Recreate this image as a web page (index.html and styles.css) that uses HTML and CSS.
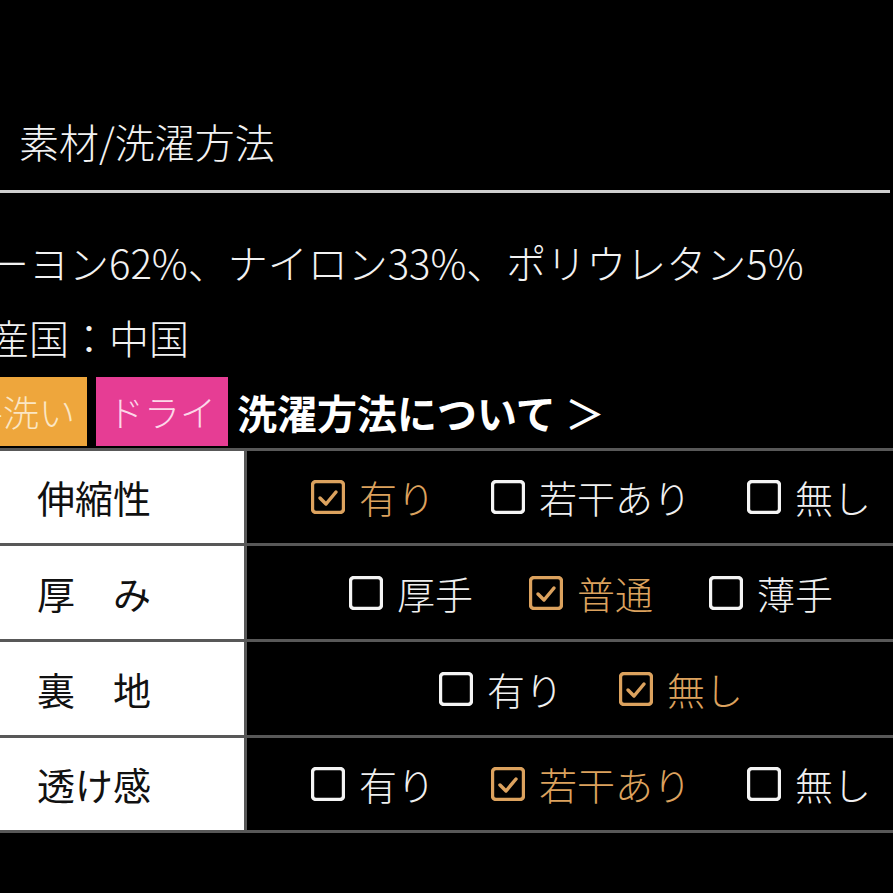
FILE: index.html
```html
<!DOCTYPE html>
<html lang="ja">
<head>
<meta charset="utf-8">
<title>素材/洗濯方法</title>
<link rel="stylesheet" href="styles.css">
</head>
<body>
<header class="head">
  <h2 class="title">素材/洗濯方法</h2>
</header>
<section class="content">
  <p class="line">レーヨン62%、ナイロン33%、ポリウレタン5%</p>
  <p class="line line-origin">原産国：中国</p>
  <div class="wash">
    <span class="badge badge-orange">手洗い</span>
    <span class="badge badge-pink">ドライ</span>
    <a class="wash-link">洗濯方法について <span class="chev">＞</span></a>
  </div>
  <div class="spec">
    <div class="row">
      <div class="label">伸縮性</div>
      <div class="opts">
        <span class="opt on"><svg class="box" viewBox="0 0 34 34"><rect x="1.5" y="1.5" width="31" height="31" rx="3.5"/><polyline points="9,18 15,24 25,12"/></svg>有り</span>
        <span class="opt"><svg class="box" viewBox="0 0 34 34"><rect x="1.5" y="1.5" width="31" height="31" rx="3.5"/></svg>若干あり</span>
        <span class="opt"><svg class="box" viewBox="0 0 34 34"><rect x="1.5" y="1.5" width="31" height="31" rx="3.5"/></svg>無し</span>
      </div>
    </div>
    <div class="row row-tall">
      <div class="label">厚　み</div>
      <div class="opts">
        <span class="opt"><svg class="box" viewBox="0 0 34 34"><rect x="1.5" y="1.5" width="31" height="31" rx="3.5"/></svg>厚手</span>
        <span class="opt on"><svg class="box" viewBox="0 0 34 34"><rect x="1.5" y="1.5" width="31" height="31" rx="3.5"/><polyline points="9,18 15,24 25,12"/></svg>普通</span>
        <span class="opt"><svg class="box" viewBox="0 0 34 34"><rect x="1.5" y="1.5" width="31" height="31" rx="3.5"/></svg>薄手</span>
      </div>
    </div>
    <div class="row row-tall">
      <div class="label">裏　地</div>
      <div class="opts">
        <span class="opt"><svg class="box" viewBox="0 0 34 34"><rect x="1.5" y="1.5" width="31" height="31" rx="3.5"/></svg>有り</span>
        <span class="opt on"><svg class="box" viewBox="0 0 34 34"><rect x="1.5" y="1.5" width="31" height="31" rx="3.5"/><polyline points="9,18 15,24 25,12"/></svg>無し</span>
      </div>
    </div>
    <div class="row">
      <div class="label">透け感</div>
      <div class="opts">
        <span class="opt"><svg class="box" viewBox="0 0 34 34"><rect x="1.5" y="1.5" width="31" height="31" rx="3.5"/></svg>有り</span>
        <span class="opt on"><svg class="box" viewBox="0 0 34 34"><rect x="1.5" y="1.5" width="31" height="31" rx="3.5"/><polyline points="9,18 15,24 25,12"/></svg>若干あり</span>
        <span class="opt"><svg class="box" viewBox="0 0 34 34"><rect x="1.5" y="1.5" width="31" height="31" rx="3.5"/></svg>無し</span>
      </div>
    </div>
  </div>
</section>
</body>
</html>
```
FILE: styles.css
```css
html, body {
  margin: 0;
  padding: 0;
  background: #000;
  overflow: hidden;
}
body {
  width: 893px;
  height: 893px;
  font-family: "Noto Sans CJK JP", "Noto Sans", sans-serif;
  color: #f2f2f2;
}
.head {
  width: 890px;
  padding: 121px 0 29px 0;
  border-bottom: 3px solid #cfcfcf;
}
.title {
  margin: 0 0 0 19px;
  font-size: 40px;
  line-height: 40px;
  font-weight: 300;
  color: #f2f2f2;
}
.content {
  margin-left: -51px;
  width: 990px;
}
.line {
  margin: 49px 0 0 0;
  font-size: 40px;
  line-height: 40px;
  font-weight: 300;
  white-space: nowrap;
}
.line-origin {
  margin-top: 35px;
}
.wash {
  margin-top: 20px;
  display: flex;
  align-items: center;
  height: 69px;
}
.badge {
  height: 69px;
  line-height: 69px;
  font-size: 36px;
  font-weight: 300;
  padding: 0 12px;
  color: #fff;
  white-space: nowrap;
}
.badge-orange {
  background: #eea63c;
  color: #fbe6c4;
  margin-left: 6px;
}
.badge-pink {
  background: #e63d94;
  color: #fcd7e8;
  margin-left: 9px;
}
.wash-link {
  margin-left: 9px;
  font-size: 40px;
  line-height: 40px;
  font-weight: 700;
  color: #fff;
  white-space: nowrap;
}
.chev {
  font-weight: 500;
}
.spec {
  margin-top: 2px;
  border-top: 3px solid #585858;
}
.row {
  display: grid;
  grid-template-columns: 298px 688px;
  height: 92px;
  border-bottom: 3px solid #585858;
}
.row-tall {
  height: 93px;
}
.label {
  background: #fff;
  border-right: 3px solid #585858;
  color: #111;
  font-size: 38px;
  line-height: 38px;
  font-weight: 400;
  display: flex;
  align-items: center;
  padding-left: 88px;
  white-space: nowrap;
}
.opts {
  display: flex;
  justify-content: center;
  align-items: center;
  gap: 56px;
}
.opt {
  display: flex;
  align-items: center;
  gap: 14px;
  font-size: 38px;
  line-height: 38px;
  font-weight: 300;
  color: #f0f0f0;
  white-space: nowrap;
}
.box {
  width: 34px;
  height: 34px;
  flex: none;
}
.box rect {
  fill: none;
  stroke: #f4f4f4;
  stroke-width: 3.4;
}
.box polyline {
  fill: none;
  stroke: #dca25e;
  stroke-width: 3.5;
  stroke-linecap: round;
  stroke-linejoin: round;
}
.opt.on {
  color: #dca25e;
}
.opt.on .box rect {
  stroke: #dca25e;
}
```
